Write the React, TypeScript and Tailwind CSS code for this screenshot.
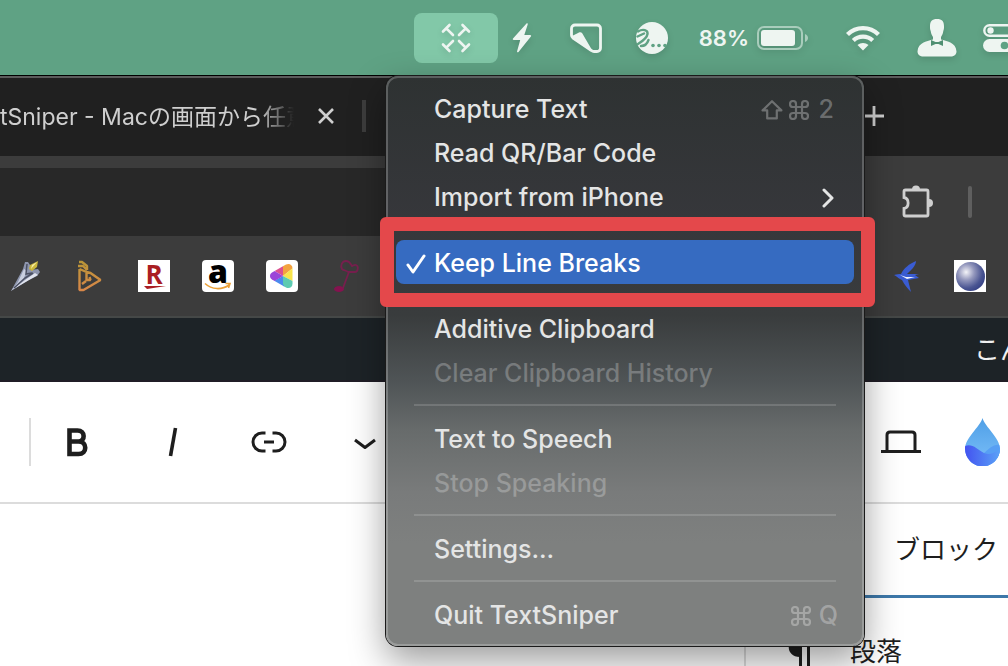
import React from "react";

const sans = "font-['Inter','Noto_Sans_CJK_JP',sans-serif]";

const CommandIcon: React.FC = () => (
    <svg viewBox="0 0 20 20" className="w-5 h-5" fill="none" stroke="currentColor" strokeWidth="2.2">
        <path d="M7 7V4a3 3 0 1 0-3 3h12a3 3 0 1 0-3-3v12a3 3 0 1 0 3-3H4a3 3 0 1 0 3 3z" />
    </svg>
);

const ShiftIcon: React.FC = () => (
    <svg viewBox="0 0 22 20" className="w-[22px] h-5" fill="none" stroke="currentColor" strokeWidth="2.2" strokeLinejoin="round">
        <path d="M11 1.2 1.6 10.4h4.6v8h9.6v-8h4.6z" />
    </svg>
);

const StatusBar: React.FC = () => (
    <header className="flex h-[75px] shrink-0 items-center justify-end overflow-hidden bg-[#5fa284] text-[#eef5f1]">
        <button aria-label="TextSniper" className="flex h-[50px] w-[84px] shrink-0 items-center justify-center rounded-lg bg-[#82c8a8]">
            <svg viewBox="0 0 30 30" className="h-[30px] w-[30px] drop-shadow-md" fill="none" stroke="currentColor" strokeWidth="2.6" strokeLinecap="round">
                <path d="M2 8.500 8.500 2M5.300 5.300 12 12M21.500 2 28 8.500M24.700 5.300 18 12M2 21.500 8.500 28M5.300 24.700 12 18M28 21.500 21.500 28M24.700 24.700 18 18" />
            </svg>
        </button>
        <button aria-label="Power" className="ml-3.5 shrink-0">
            <svg viewBox="0 0 20 30" className="h-[30px] w-5 drop-shadow-md" fill="currentColor">
                <path d="M14.500.500c.800-.400 1.500.200 1.200 1.100L12.300 12h5.900c.900 0 1.200.800.700 1.500L6.500 29c-.700.700-1.700.300-1.400-.800L8.200 17H1.700c-.900 0-1.200-.800-.700-1.500z" />
            </svg>
        </button>
        <button aria-label="Notes" className="ml-[38px] shrink-0">
            <svg viewBox="0 0 32 30" className="h-[30px] w-8 drop-shadow-md">
                <path d="M5 2h22a3.500 3.500 0 0 1 3.500 3.500V25a3.500 3.500 0 0 1-3.500 3.500h-3c-1 0-1.800-.400-2.500-1L3 15a3.500 3.500 0 0 1-1.500-2.800V5.500A3.500 3.500 0 0 1 5 2z" fill="none" stroke="currentColor" strokeWidth="2.800" />
                <path d="m2 13 7-3.500c1.200-.600 2.500-.300 3.200.800L22 27l-2 1z" fill="currentColor" />
            </svg>
        </button>
        <button aria-label="Translate" className="ml-[34px] shrink-0">
            <svg viewBox="0 0 32 32" className="h-8 w-8 drop-shadow-md">
                <circle cx="16" cy="16" r="16" fill="currentColor" />
                <g fill="none" stroke="#5fa284" strokeWidth="2.400" strokeLinecap="round">
                    <path d="M1.500 14.500 8 11.500M2 9.500c5-3 10-1.500 9.500 2.500C11 16 6 19.500 2 22M5 24c5 0 6.500-3 7.500-6" />
                </g>
                <g fill="#5fa284">
                    <circle cx="17" cy="23.500" r="1.800" />
                    <circle cx="23" cy="23.500" r="1.800" />
                    <circle cx="29" cy="23.500" r="1.800" />
                </g>
            </svg>
        </button>
        <span className="ml-[31px] shrink-0 pt-0.5 text-[22px] font-semibold">88%</span>
        <svg viewBox="0 0 52 24" className="ml-2 h-6 w-[52px] shrink-0 drop-shadow-md">
            <rect x="1" y="1" width="44" height="22" rx="6" fill="none" stroke="#a9cdbc" strokeWidth="2" />
            <rect x="4" y="4" width="34" height="16" rx="3" fill="currentColor" />
            <path d="M48 8c4 1.500 4 6.500 0 8z" fill="#a9cdbc" />
        </svg>
        <button aria-label="Wi-Fi" className="ml-9 shrink-0">
            <svg viewBox="0 0 36 26" className="h-[26px] w-9 drop-shadow-md" fill="none" stroke="currentColor" strokeWidth="4.200">
                <path d="M2.500 9.500c8.500-8.600 22.500-8.600 31 0M8.300 15.600c5.300-5.200 14.100-5.200 19.400 0" />
                <path d="M18 25.500 12.500 20c3-2.800 8-2.800 11 0z" fill="currentColor" stroke="none" />
            </svg>
        </button>
        <button aria-label="User" className="ml-9 shrink-0">
            <svg viewBox="0 0 40 38" className="h-[38px] w-10 drop-shadow-md">
                <path d="M20 0c5 0 7 2.500 7 7 0 2 0 3.500-.700 5-.400 3-1.300 4.500-2.300 6v2.500c5 1.500 15 2.500 15.500 12 0 3-2.500 5-6 5H6.500c-3.500 0-6-2-6-5C1 23 11 22 16 20.500V18c-1-1.500-1.900-3-2.300-6-.700-1.500-.700-3-.700-5 0-4.500 2-7 7-7z" fill="currentColor" />
                <path d="m14 21 4.500 2h3l4.500-2v6l-4.500-2h-3L14 27z" fill="#4f8f72" />
            </svg>
        </button>
        <button aria-label="Control Center" className="-mr-[9px] ml-[26px] shrink-0">
            <svg viewBox="0 0 34 28" className="h-7 w-[34px] drop-shadow-md">
                <rect x="1.300" y="1.300" width="31" height="10.400" rx="5.200" fill="none" stroke="currentColor" strokeWidth="2.400" />
                <circle cx="7.500" cy="6.500" r="3.200" fill="currentColor" />
                <rect y="15" width="34" height="13" rx="6.500" fill="currentColor" />
                <circle cx="21.500" cy="21.500" r="3.800" fill="#5fa284" />
            </svg>
        </button>
    </header>
);

const BrowserTabs: React.FC = () => (
    <div className="flex h-[81px] shrink-0 items-center justify-between border-t border-black bg-[#202020] text-[#cfcfcf] shadow-[inset_0_2px_0_#5c5c5c]">
        <div className="flex items-center">
            <span className="w-[294px] overflow-hidden whitespace-nowrap pt-0.5 text-[23px] [mask-image:linear-gradient(to_right,black_88%,transparent)]">
                tSniper - Macの画面から任意
            </span>
            <button aria-label="Close tab" className="ml-6">
                <svg viewBox="0 0 16 16" className="h-4 w-4" stroke="currentColor" strokeWidth="2.600">
                    <path d="m1 1 14 14M15 1 1 15" />
                </svg>
            </button>
            <span className="ml-7 h-8 w-1 bg-[#3d3d3d]" />
        </div>
        <button aria-label="New tab" className="mr-[124px]">
            <svg viewBox="0 0 20 20" className="h-5 w-5" stroke="currentColor" strokeWidth="2.800">
                <path d="M10 0v20M0 10h20" />
            </svg>
        </button>
    </div>
);

const AddressBar: React.FC = () => (
    <div className="flex h-20 shrink-0 items-center justify-between bg-[#3c3c3c] pt-3">
        <input aria-label="Address" className="h-full w-3/5 bg-[#282828] outline-none" />
        <div className="flex items-center pr-9">
            <button aria-label="Extensions" className="mr-[34px] text-[#cfcfcf]">
                <svg viewBox="0 0 34 34" className="h-[34px] w-[34px]">
                    <path d="M5.500 5h21c1 0 1.500.500 1.500 1.500v23c0 1-.500 1.500-1.500 1.500h-21c-1 0-1.500-.500-1.500-1.500v-6c5.500-1 5.500-10 0-11v-6C4 5.500 4.500 5 5.500 5z" fill="none" stroke="currentColor" strokeWidth="2.800" />
                    <path d="M12 4.500a4 4 0 0 1 8 0zM29 14a4 4 0 0 1 0 8z" fill="currentColor" />
                </svg>
            </button>
            <span className="h-8 w-1 rounded-sm bg-[#5f5f5f]" />
        </div>
    </div>
);

const BookmarksBar: React.FC = () => (
    <nav className="flex h-[82px] shrink-0 items-center justify-between border-b-2 border-[#454847] bg-[#3c3c3c] pr-[22px] pl-2.5">
        <div className="flex items-center gap-8">
            <a href="#sword" aria-label="Sword">
                <svg viewBox="0 0 32 32" className="h-8 w-8">
                    <path d="M1 31 13 9l2-7h3l2 3v5l8-1 2 3-3 4-8 4z" fill="#8d95ad" />
                    <path d="m1 31 7-9 6-13 3 2-4 9z" fill="#c9cfe0" />
                    <path d="M2 30 15 20l10-7 3 2-9 5z" fill="#e1e4ee" />
                    <path d="m4 28 11-10 8-5M17 4l-1 10 6-1" fill="none" stroke="#4b5063" strokeWidth="1.500" />
                    <path d="m28 1-1 6-5 4-3-2 1-4z" fill="#c9b63c" />
                    <path d="m27 2-5 3-1 4z" fill="#f8eda0" />
                </svg>
            </a>
            <a href="#videos" aria-label="Videos">
                <svg viewBox="0 0 32 32" className="h-8 w-8">
                    <defs>
                        <linearGradient id="amber" x1="0" y1="0" x2="0" y2="1">
                            <stop offset="0" stopColor="#b99537" />
                            <stop offset="1" stopColor="#d88748" />
                        </linearGradient>
                    </defs>
                    <g fill="none" stroke="url(#amber)" strokeWidth="2.400" strokeLinejoin="bevel">
                        <path d="M5 2h3l5 4v4M5.500 9v21h4l17-10-10-7-4-1v8h4l-1-3M5.500 9l7 3M8 24l4-3M4 6h5l4 4" />
                    </g>
                </svg>
            </a>
            <a href="#rakuten" className="relative flex h-8 w-8 justify-center bg-white font-['Open_Sans',sans-serif] text-[26px] leading-7 font-bold text-[#aa1e23]">
                R
                <svg viewBox="0 0 32 32" className="absolute inset-0 h-8 w-8" fill="currentColor">
                    <path d="M6 26h22l-19 3z" />
                </svg>
            </a>
            <a href="#amazon" className="relative flex h-8 w-8 justify-center rounded bg-white font-['Open_Sans',sans-serif] text-[32px] leading-[22px] font-extrabold text-black">
                a
                <svg viewBox="0 0 32 32" className="absolute inset-0 h-8 w-8" fill="none" stroke="#eba037" strokeWidth="1.600">
                    <path d="M3 23.500c7 6.500 17 6.500 24 1.500M23.500 23.500h4.500l-1.500 4.500" />
                </svg>
            </a>
            <a href="#prism" aria-label="Prism">
                <svg viewBox="0 0 32 32" className="h-8 w-8">
                    <rect width="32" height="32" rx="4" fill="#fff" />
                    <clipPath id="prism">
                        <path d="M6 12.500 20 4.500c3-1.500 6.500 0 6.500 4v15c0 4-3.500 5.500-6.500 4L6 19.500c-2.700-1.700-2.700-5.300 0-7z" />
                    </clipPath>
                    <g clipPath="url(#prism)">
                        <path d="M17 16 0 6V0h17z" fill="#dc5090" />
                        <path d="M17 0h15v4L17 16z" fill="#f3a340" />
                        <path d="M32 4v20L17 16z" fill="#f8e44c" />
                        <path d="m17 16 15 8v8H17z" fill="#5ecbb1" />
                        <path d="M17 16v8l4 8H6l-2-9z" fill="#4b8aee" />
                        <path d="M17 16 0 26V6z" fill="#9b45d8" />
                    </g>
                </svg>
            </a>
            <a href="#music" aria-label="Music">
                <svg viewBox="0 0 32 32" className="h-8 w-8" fill="none" stroke="#771f4e" strokeWidth="1.800">
                    <ellipse cx="9" cy="29" rx="5" ry="3" fill="#84134f" stroke="none" />
                    <path d="m13 28 6-16h6c3 0 4-6 1-7-2-.500-3 1-4 1-1-1-2-5-6-5-4 0-6 5-4 8 2 2 4 1 6 3" />
                </svg>
            </a>
        </div>
        <div className="flex items-center gap-8">
            <a href="#swallow" aria-label="Swallow">
                <svg viewBox="0 0 32 32" className="h-8 w-8">
                    <path d="M26 1c0 5-5 9-9 13h12l-4 1 4 3-11 2 3 12c-4-4-7-8-9-12-3-1-4-3-8-5 3-1 5-1 7-1C14 8 19 4 26 1z" fill="#3a5cd2" />
                    <path d="m10 15 6 2h9l-8 2z" fill="#f2f5ff" />
                </svg>
            </a>
            <a href="#sphere" aria-label="Sphere" className="flex h-8 w-8 items-center justify-center bg-white">
                <span className="h-[29px] w-[29px] rounded-full bg-[radial-gradient(circle_at_35%_35%,#f4f4f8,#9498bd_30%,#4a5592_60%,#1d2a78)]" />
            </a>
        </div>
    </nav>
);

const Editor: React.FC = () => (
    <main className="flex flex-1 flex-col bg-white text-[#1e1e1e]">
        <div className="flex h-[122px] shrink-0 items-center justify-between border-b-2 border-[#dcdcdc] pr-2 pl-[29px]">
            <div className="flex items-center">
                <span className="-mr-0.5 h-12 w-0.5 bg-[#dcdcdc]" />
                <button aria-label="Bold" className="flex w-24 justify-center">
                    <svg viewBox="0 0 24 30" className="h-[30px] w-6">
                        <path d="M4.500 3.500h8c8 0 8 11 1 11h-9 9c9 0 9 12.500 0 12.500h-9z" fill="none" stroke="currentColor" strokeWidth="4.600" />
                    </svg>
                </button>
                <button aria-label="Italic" className="flex w-24 justify-center">
                    <svg viewBox="0 0 12 30" className="h-[30px] w-3" stroke="currentColor" strokeWidth="3.600">
                        <path d="M8.500 1 3.500 29" />
                    </svg>
                </button>
                <button aria-label="Link" className="flex w-24 justify-center">
                    <svg viewBox="0 0 36 22" className="h-[22px] w-9" fill="none" stroke="currentColor" strokeWidth="3">
                        <path d="M14.500 2H11a9 9 0 0 0 0 18h3.500M21.500 2H25a9 9 0 0 1 0 18h-3.500M13 11h10" />
                    </svg>
                </button>
                <button aria-label="More" className="flex w-24 justify-center pt-1">
                    <svg viewBox="0 0 22 12" className="h-3 w-[22px]" fill="none" stroke="currentColor" strokeWidth="3" strokeLinejoin="round">
                        <path d="m1 2 10 7.500L21 2" />
                    </svg>
                </button>
            </div>
            <div className="flex items-center gap-11">
                <button aria-label="Preview">
                    <svg viewBox="0 0 40 24" className="h-6 w-10" fill="none" stroke="currentColor" strokeWidth="3">
                        <path d="M6 21V5c0-2 1-3 3-3h22c2 0 3 1 3 3v16M0 21.500h40" />
                    </svg>
                </button>
                <button aria-label="Water drop">
                    <svg viewBox="0 0 35 48" className="h-12 w-[35px]">
                        <defs>
                            <linearGradient id="drop" x1="0" y1="0" x2="0" y2="1">
                                <stop offset="0" stopColor="#4f9fe6" />
                                <stop offset="1" stopColor="#7cc0fa" />
                            </linearGradient>
                            <linearGradient id="wave" x1="0" y1="0" x2="1" y2="0">
                                <stop offset="0" stopColor="#4353f0" />
                                <stop offset="1" stopColor="#5ba2f7" />
                            </linearGradient>
                            <clipPath id="dropShape">
                                <path d="M17.500 0C20 9 35 20 35 31a17.300 17 0 0 1-35 0C0 20 15 9 17.500 0z" />
                            </clipPath>
                        </defs>
                        <g clipPath="url(#dropShape)">
                            <path d="M0 0h35v48H0z" fill="url(#drop)" />
                            <path d="M18 36c6-5 10-10 17-9v21H0z" fill="#579ff4" />
                            <path d="M0 28c7-3 12 3 19 7 5 2 9 1 16-4v17H0z" fill="url(#wave)" />
                        </g>
                    </svg>
                </button>
            </div>
        </div>
        <div className="flex flex-1 justify-end">
            <aside className="w-[264px] border-l-2 border-[#dcdcdc] text-[26px]">
                <div className="flex h-[94px] items-center justify-end border-b-[3px] border-[#3d78a9] pr-2.5">
                    <button>ブロック</button>
                </div>
                <div className="flex items-start gap-10 pt-[34px] pl-[42px]">
                    <svg viewBox="0 0 22 36" className="mt-1 h-9 w-[22px]" fill="none" stroke="currentColor" strokeWidth="3">
                        <path d="M11 2h11M12.500 2v34M20.500 2v34" />
                        <path d="M12 2v19C-3 21-3 2 12 2z" fill="currentColor" stroke="none" />
                    </svg>
                    <h2 className="leading-10">段落</h2>
                </div>
            </aside>
        </div>
    </main>
);

type ItemProps = {
    label: string;
    disabled?: boolean;
    active?: boolean;
    children?: React.ReactNode;
};

const MenuItem: React.FC<ItemProps> = ({ label, disabled, active, children }) => (
    <button
        role="menuitem"
        disabled={disabled}
        className={`flex h-11 w-full items-center rounded-lg pt-[3px] pr-5 pl-2.5 text-left ${
            active ? "bg-[#366bc1] text-white" : disabled ? "text-white/25" : "text-[#e4e5e5]"
        }`}
    >
        <span className="w-7">
            {active && (
                <svg viewBox="0 0 20 20" className="h-5 w-5" fill="none" stroke="currentColor" strokeWidth="3" strokeLinecap="round" strokeLinejoin="round">
                    <path d="m2 11 5 7L18 2" />
                </svg>
            )}
        </span>
        <span className="flex-1">{label}</span>
        {children}
    </button>
);

const Separator: React.FC = () => (
    <div role="separator" className="mx-[18px] flex h-[22px] items-center">
        <span className="h-0.5 w-full bg-white/15" />
    </div>
);

const SniperMenu: React.FC = () => (
    <div
        role="menu"
        className="absolute top-[76px] left-[386px] w-[478px] rounded-xl bg-[linear-gradient(to_bottom,#2e3232_0%,#36373b_25%,#393c3d_42%,#505557_54%,#676b6b_62%,#797b7b_73%,#7e807f_82%,#7e807f_100%)] px-2.5 py-2.5 text-[25px] font-medium shadow-[inset_0_0_0_2px_rgba(255,255,255,0.22),0_0_0_1px_#1a1a1a,0_14px_36px_rgba(0,0,0,0.4)]"
    >
        <MenuItem label="Capture Text">
            <span className="flex items-center gap-1.5 text-white/30">
                <ShiftIcon />
                <CommandIcon />
                <span className="ml-1">2</span>
            </span>
        </MenuItem>
        <MenuItem label="Read QR/Bar Code" />
        <MenuItem label="Import from iPhone">
            <svg viewBox="0 0 12 20" className="h-5 w-3" fill="none" stroke="currentColor" strokeWidth="3" strokeLinecap="round" strokeLinejoin="round">
                <path d="m2 2 8 8-8 8" />
            </svg>
        </MenuItem>
        <div className="h-[22px]" />
        <div className="relative">
            <MenuItem label="Keep Line Breaks" active />
            <span className="pointer-events-none absolute -top-[23px] -right-[21px] -bottom-[23px] -left-4 rounded-md border-14 border-[#e4484b]" />
        </div>
        <div className="h-[22px]" />
        <MenuItem label="Additive Clipboard" />
        <MenuItem label="Clear Clipboard History" disabled />
        <Separator />
        <MenuItem label="Text to Speech" />
        <MenuItem label="Stop Speaking" disabled />
        <Separator />
        <MenuItem label="Settings..." />
        <Separator />
        <MenuItem label="Quit TextSniper">
            <span className="-mr-1 flex items-center gap-2 text-white/30">
                <CommandIcon />
                <span>Q</span>
            </span>
        </MenuItem>
    </div>
);

const App: React.FC = () => {
    return (
        <div className={`relative flex h-screen flex-col overflow-hidden ${sans}`}>
            <StatusBar />
            <BrowserTabs />
            <AddressBar />
            <BookmarksBar />
            <div className="flex h-16 shrink-0 items-center justify-end border-b-2 border-[#201d26] bg-[#1d2327] text-[26px] text-[#f0f0f1]">
                <span className="w-[34px] overflow-hidden whitespace-nowrap">こんにちは</span>
            </div>
            <Editor />
            <SniperMenu />
        </div>
    );
};

export default App;
